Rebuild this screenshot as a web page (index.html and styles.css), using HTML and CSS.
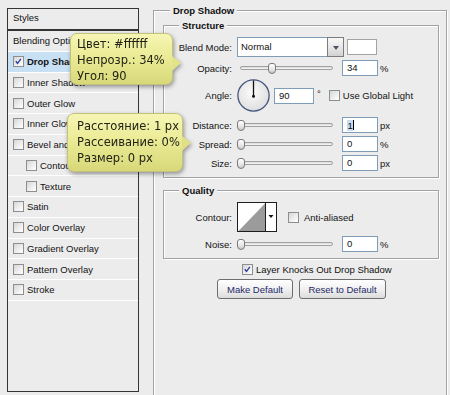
FILE: index.html
```html
<!DOCTYPE html>
<html lang="en">
<head>
<meta charset="utf-8">
<title>Layer Style - Drop Shadow</title>
<link rel="stylesheet" href="styles.css">
</head>
<body>
<div class="app">
  <aside class="styles-panel">
    <div class="styles-head">Styles</div>
    <ul class="styles-list">
      <li class="item">Blending Options: Default</li>
      <li class="item selected"><span class="cb"><svg class="tick" viewBox="0 0 11 11"><path d="M2.2 5.2 L4.3 7.8 L8.4 2.2"/></svg></span><b>Drop Shadow</b></li>
      <li class="item"><span class="cb"></span>Inner Shadow</li>
      <li class="item"><span class="cb"></span>Outer Glow</li>
      <li class="item"><span class="cb"></span>Inner Glow</li>
      <li class="item"><span class="cb"></span>Bevel and Emboss</li>
      <li class="item sub"><span class="cb"></span>Contour</li>
      <li class="item sub"><span class="cb"></span>Texture</li>
      <li class="item"><span class="cb"></span>Satin</li>
      <li class="item"><span class="cb"></span>Color Overlay</li>
      <li class="item"><span class="cb"></span>Gradient Overlay</li>
      <li class="item"><span class="cb"></span>Pattern Overlay</li>
      <li class="item"><span class="cb"></span>Stroke</li>
    </ul>
  </aside>

  <main class="dialog">
    <section class="group group-main">
      <div class="group-title title-main">Drop Shadow</div>

      <section class="group group-sub group-structure">
        <div class="group-title title-sub">Structure</div>

        <div class="row row-blend">
          <span class="lbl">Blend Mode:</span>
          <div class="select"><span class="select-field">Normal</span><span class="select-btn"><span class="arrow"></span></span></div>
          <span class="swatch"></span>
        </div>

        <div class="row row-field row-opacity">
          <span class="lbl">Opacity:</span>
          <div class="slider"><span class="track"></span><span class="thumb" style="left:31px"></span></div>
          <span class="num">34</span><span class="unit">%</span>
        </div>

        <div class="row row-angle">
          <span class="lbl">Angle:</span>
          <svg class="dial" width="33" height="33" viewBox="0 0 33 33">
            <defs>
              <radialGradient id="dialFill" cx="45%" cy="40%" r="65%">
                <stop offset="0" stop-color="#fbfbfb"/>
                <stop offset="1" stop-color="#dcdcdc"/>
              </radialGradient>
            </defs>
            <circle cx="16.5" cy="16.5" r="15.6" fill="url(#dialFill)" stroke="#44557e" stroke-width="1.3"/>
            <line x1="16.5" y1="17" x2="16.5" y2="1.4" stroke="#111" stroke-width="1.3"/>
            <circle cx="16.5" cy="17.2" r="1.5" fill="#111"/>
          </svg>
          <span class="num num-angle">90</span><span class="deg">°</span>
          <span class="cb cb-global"></span><span>Use Global Light</span>
        </div>

        <div class="row row-field row-distance">
          <span class="lbl">Distance:</span>
          <div class="slider"><span class="track"></span><span class="thumb" style="left:0"></span></div>
          <span class="num"><span class="sel">1</span><span class="caret"></span></span><span class="unit">px</span>
        </div>

        <div class="row row-field row-spread">
          <span class="lbl">Spread:</span>
          <div class="slider"><span class="track"></span><span class="thumb" style="left:0"></span></div>
          <span class="num">0</span><span class="unit">%</span>
        </div>

        <div class="row row-field row-size">
          <span class="lbl">Size:</span>
          <div class="slider"><span class="track"></span><span class="thumb" style="left:0"></span></div>
          <span class="num">0</span><span class="unit">px</span>
        </div>
      </section>

      <section class="group group-sub group-quality">
        <div class="group-title title-sub">Quality</div>

        <div class="row row-contour">
          <span class="lbl">Contour:</span>
          <svg class="contour" width="40" height="30" viewBox="0 0 40 30">
            <rect x="0.5" y="0.5" width="39" height="29" fill="#fff" stroke="#1e1e1e"/>
            <polygon points="1.5,29 28,1.5 28,29" fill="#9b9b9b"/>
            <line x1="28.5" y1="0" x2="28.5" y2="30" stroke="#1e1e1e"/>
            <polygon points="31.5,13 36.5,13 34,16" fill="#111"/>
          </svg>
          <span class="cb cb-anti"></span><span>Anti-aliased</span>
        </div>

        <div class="row row-field row-noise">
          <span class="lbl">Noise:</span>
          <div class="slider"><span class="track"></span><span class="thumb" style="left:0"></span></div>
          <span class="num">0</span><span class="unit">%</span>
        </div>
      </section>

      <div class="knock"><span class="cb"><svg class="tick" viewBox="0 0 11 11"><path d="M2.2 5.2 L4.3 7.8 L8.4 2.2"/></svg></span><span>Layer Knocks Out Drop Shadow</span></div>

      <div class="buttons">
        <button class="btn btn-make" type="button">Make Default</button>
        <button class="btn btn-reset" type="button">Reset to Default</button>
      </div>
    </section>
  </main>

  <div class="tip tip-1">Цвет: #ffffff<br>Непрозр.: 34%<br>Угол: 90</div>
  <div class="tip tip-2">Расстояние: 1 px<br>Рассеивание: 0%<br>Размер: 0 px</div>
</div>
</body>
</html>
```

FILE: styles.css
```css
html, body {
  margin: 0;
  padding: 0;
  height: 395px;
  overflow: hidden;
  background: #ececec;
}

body {
  font-family: "Liberation Sans", Arial, sans-serif;
  font-size: 9.5px;
  color: #121212;
}

.app {
  position: relative;
  display: flex;
  align-items: flex-start;
  height: 395px;
  overflow: hidden;
}

/* ---------- left styles list ---------- */
.styles-panel {
  margin: 8px 0 0 7px;
  width: 132px;
  display: flex;
  flex-direction: column;
  flex: none;
}

.styles-head {
  border: 1px solid #353535;
  line-height: 18px;
  padding: 0 0 2px 5px;
  height: 18px;
}

.styles-list {
  list-style: none;
  margin: 0;
  padding: 0;
  border: 1px solid #353535;
  height: 360px;
  overflow: hidden;
}

.item {
  height: 19.75px;
  border-bottom: 1px solid #ffffff;
  display: flex;
  align-items: center;
  padding-left: 5px;
  white-space: nowrap;
  overflow: hidden;
}

.item.sub {
  padding-left: 18px;
}

.item.selected {
  background: #c8e0f4;
}

.item b {
  font-weight: bold;
}

.cb {
  width: 11px;
  height: 11px;
  box-sizing: border-box;
  border: 1px solid #8d8e8f;
  background: linear-gradient(135deg, #d6d6d6 0%, #eeeeee 55%, #ffffff 100%);
  flex: none;
  margin-right: 3px;
  display: flex;
}

.tick {
  width: 9px;
  height: 9px;
}

.tick path {
  fill: none;
  stroke: #2a3e9c;
  stroke-width: 1.6;
}

/* ---------- dialog ---------- */
.dialog {
  margin-left: 14px;
  width: 294px;
  flex: none;
}

.group {
  border: 1px solid #a2a2a2;
  box-shadow: inset 1px 1px 0 #ffffff, 1px 1px 0 #ffffff;
}

.group-main {
  margin-top: 10px;
  height: 384px;
  border-bottom: none;
  padding: 0 7px 0 9px;
}

.group-title {
  width: max-content;
  margin-top: -7px;
  padding: 0 3px;
  line-height: 13px;
  font-weight: bold;
  background: #ececec;
  color: #101010;
}

.title-main {
  margin-left: 7px;
}

.title-sub {
  margin-left: 15px;
}

.group-structure {
  margin-top: 8px;
  padding-bottom: 6px;
}

.group-quality {
  margin-top: 12px;
  padding-bottom: 6px;
}

.row {
  display: flex;
  align-items: center;
  white-space: nowrap;
}

.lbl {
  width: 68px;
  text-align: right;
  margin-right: 5px;
  flex: none;
}

.row-blend {
  margin-top: 5px;
  height: 20px;
}

.row-field {
  height: 16px;
  margin-top: 3px;
}

.row-opacity {
  margin-top: 3px;
}

.row-angle {
  margin-top: 3px;
  height: 33px;
}

.row-distance {
  margin-top: 5px;
}

.row-contour {
  margin-top: 5px;
  height: 30px;
}

.row-noise {
  margin-top: 4px;
}

/* select */
.select {
  display: flex;
  width: 107px;
  height: 20px;
  flex: none;
}

.select-field {
  flex: 1;
  box-sizing: border-box;
  border: 1px solid #7f9db9;
  border-right: none;
  background: #ffffff;
  padding-left: 3px;
  line-height: 18px;
}

.select-btn {
  width: 17px;
  box-sizing: border-box;
  border: 1px solid #7c7c7c;
  background: linear-gradient(#f8f8f8, #e4e4e4 60%, #d2d2d2);
  display: flex;
  align-items: center;
  justify-content: center;
}

.arrow {
  width: 0;
  height: 0;
  border-left: 3.5px solid transparent;
  border-right: 3.5px solid transparent;
  border-top: 4px solid #4b5568;
  margin-top: 1px;
}

.swatch {
  margin-left: 3px;
  width: 30px;
  height: 16px;
  box-sizing: border-box;
  border: 1px solid #a3a3a3;
  background: #ffffff;
  flex: none;
}

/* slider */
.slider {
  position: relative;
  width: 99px;
  height: 11px;
  padding: 0 3px;
  box-sizing: border-box;
  display: flex;
  align-items: center;
  flex: none;
}

.track {
  flex: 1;
  height: 4px;
  box-sizing: border-box;
  border: 1px solid #a0a0a0;
  border-radius: 3px;
  background: linear-gradient(#d8d8d8, #f8f8f8);
}

.thumb {
  position: absolute;
  top: 0;
  width: 8px;
  height: 11px;
  box-sizing: border-box;
  border: 1px solid #7a7a7a;
  border-radius: 3px 3px 4px 4px;
  background: linear-gradient(#ffffff, #e6e6e6 60%, #c9c9c9);
}

.num {
  margin-left: 6px;
  width: 36px;
  height: 16px;
  box-sizing: border-box;
  border: 1px solid #7f9db9;
  background: #ffffff;
  padding-left: 4px;
  line-height: 14px;
  flex: none;
  color: #111;
  display: flex;
  align-items: center;
}

.num-angle {
  margin-left: 4px;
  width: 40px;
}

.sel {
  background: #c9dcf2;
  line-height: 11px;
  padding: 0 0.5px;
}

.caret {
  width: 1px;
  height: 10px;
  background: #000;
}

.unit {
  margin-left: 2px;
}

.deg {
  margin-left: 3px;
  align-self: flex-start;
  margin-top: 9px;
}

.cb-global {
  margin-left: 8px;
}

.cb-anti {
  margin-left: 11px;
  margin-right: 5px;
}

.dial {
  flex: none;
}

.contour {
  flex: none;
}

/* bottom controls */
.knock {
  margin: 4px 0 0 79px;
  height: 12px;
  display: flex;
  align-items: center;
  white-space: nowrap;
}

.buttons {
  margin: 4px 0 0 54px;
  display: flex;
  gap: 6px;
}

.btn {
  height: 20px;
  padding: 0;
  font-family: inherit;
  font-size: 9.5px;
  color: #1c2866;
  border: 1px solid #6e6e6e;
  border-radius: 3px;
  background: linear-gradient(#ffffff, #f1f1f1 50%, #dcdcdc);
}

.btn-make {
  width: 76px;
}

.btn-reset {
  width: 87px;
}

/* tooltips */
.tip {
  position: absolute;
  box-sizing: border-box;
  font-family: "DejaVu Sans", Verdana, sans-serif;
  font-size: 11.5px;
  line-height: 16px;
  color: #222216;
  white-space: nowrap;
  background: linear-gradient(#f6f6b4 0%, #ebeb96 45%, #d8d87a 100%);
  border: 1px solid #c2c27c;
  border-radius: 7px;
  filter: drop-shadow(1px 2px 2px rgba(0, 0, 0, 0.38));
  z-index: 5;
}

.tip::after {
  content: "";
  position: absolute;
  width: 9px;
  height: 15px;
  right: -9px;
  clip-path: polygon(0 0, 100% 45%, 0 100%);
  background: #e3e38a;
}

.tip-1 {
  left: 70px;
  top: 33px;
  width: 103px;
  height: 52px;
  padding: 2px 0 0 6px;
}

.tip-1::after {
  top: 22px;
}

.tip-2 {
  left: 67px;
  top: 113px;
  width: 116px;
  height: 59px;
  padding: 4px 0 0 9px;
}

.tip-2::after {
  top: 22px;
  background: #e0e086;
}
```
